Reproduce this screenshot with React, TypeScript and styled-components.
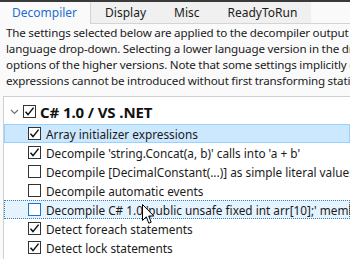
import React from "react";
import styled, { createGlobalStyle, css } from "styled-components";

const Global = createGlobalStyle`
  html, body { margin: 0; padding: 0; background: #fafafa; overflow: hidden; }
  body { font-family: "Noto Sans", "Segoe UI", sans-serif; font-size: 11.8px; color: #1b1b1b; }
`;

const Window = styled.div`
  position: relative;
  width: 350px;
  height: 259px;
  overflow: hidden;
  background: #fafafa;
  display: flex;
  flex-direction: column;
`;

const TopBar = styled.div`
  height: 2px;
  background: #3a3a3a;
  flex: none;
`;

const TabStrip = styled.div`
  display: flex;
  height: 21px;
  border-bottom: 1px solid #d4d4d4;
  flex: none;
  font-size: 12px;
`;

const Tab = styled.div<{ $active?: boolean; $first?: boolean }>`
  display: flex;
  align-items: center;
  padding: 0 14px 0 ${(p) => (p.$first ? "12px" : "14px")};
  background: #f0f0f0;
  color: #1b1b1b;
  line-height: 1;
  ${(p) =>
    p.$active &&
    css`
      background: #fafafa;
      color: #1a6fd1;
      border-right: 1px solid #d4d4d4;
      margin-bottom: -1px;
      padding-right: 13px;
    `}
`;

const Content = styled.div`
  display: flex;
  flex-direction: column;
  padding: 1px 0 0 6px;
  flex: 1;
  min-height: 0;
`;

const Line = styled.div`
  height: 16px;
  line-height: 16px;
  white-space: nowrap;
  overflow: hidden;
  font-size: 11.6px;
  letter-spacing: -0.13px;
  word-spacing: -0.3px;
`;

const Tree = styled.div`
  margin: 7px 0 0 -3px;
  background: #ffffff;
  border-top: 1px solid #cfcfcf;
  border-left: 1px solid #cfcfcf;
  padding-top: 2px;
  flex: 1;
`;

const HeaderRow = styled.div`
  display: flex;
  align-items: center;
  height: 25px;
  padding-left: 6px;
`;

const Chevron = styled.svg`
  width: 9px;
  height: 6px;
  margin-right: 4px;
  flex: none;
`;

const Box = styled.span<{ $hover?: boolean }>`
  width: 11px;
  height: 11px;
  border: 1px solid ${(p) => (p.$hover ? "#1a73d9" : "#333333")};
  background: #ffffff;
  display: inline-flex;
  align-items: center;
  justify-content: center;
  flex: none;
`;

const HeaderText = styled.span`
  font-weight: 700;
  font-size: 15px;
  margin-left: 4px;
  white-space: nowrap;
  color: #111;
  letter-spacing: -0.1px;
`;

const Row = styled.div<{ $selected?: boolean; $focused?: boolean }>`
  display: flex;
  align-items: center;
  height: 19px;
  box-sizing: border-box;
  padding-left: 23px;
  border: 1px solid transparent;
  white-space: nowrap;
  ${(p) =>
    p.$selected &&
    css`
      background: #cce8ff;
      border-color: #99d1ff;
    `}
  ${(p) =>
    p.$focused &&
    css`
      background: #e5f3ff;
      border: 1px dotted #3c7fb1;
    `}
`;

const RowText = styled.span`
  margin-left: 5px;
  white-space: nowrap;
`;

const Cursor = styled.svg`
  position: absolute;
  left: 142px;
  top: 204px;
  width: 13px;
  height: 21px;
`;

const Check = () => (
  <svg width="11" height="11" viewBox="0 0 11 11">
    <path d="M1.5 5.8 L4 8.6 L9.6 1.6" fill="none" stroke="#111" strokeWidth="1.5" />
  </svg>
);

const CheckBox = ({ checked, hover }: { checked?: boolean; hover?: boolean }) => (
  <Box $hover={hover}>{checked ? <Check /> : null}</Box>
);

const items: { text: string; checked: boolean; selected?: boolean; focused?: boolean }[] = [
  { text: "Array initializer expressions", checked: true, selected: true },
  { text: "Decompile 'string.Concat(a, b)' calls into 'a + b'", checked: true },
  { text: "Decompile [DecimalConstant(...)] as simple literal values", checked: false },
  { text: "Decompile automatic events", checked: false },
  { text: "Decompile C# 1.0 'public unsafe fixed int arr[10];' members", checked: false, focused: true },
  { text: "Detect foreach statements", checked: true },
  { text: "Detect lock statements", checked: true },
];

export default function App() {
  return (
    <Window>
      <Global />
      <TopBar />
      <TabStrip>
        <Tab $active $first>Decompiler</Tab>
        <Tab>Display</Tab>
        <Tab>Misc</Tab>
        <Tab>ReadyToRun</Tab>
      </TabStrip>
      <Content>
        <Line>The settings selected below are applied to the decompiler output in combination with the selection in the</Line>
        <Line>language drop-down. Selecting a lower language version in the drop-down will deactivate all selected</Line>
        <Line>options of the higher versions. Note that some settings implicitly depend on each other, e.g.: LINQ</Line>
        <Line>expressions cannot be introduced without first transforming static calls to extension method calls.</Line>
        <Tree>
          <HeaderRow>
            <Chevron viewBox="0 0 9 6">
              <path d="M1 1 L4.5 4.5 L8 1" fill="none" stroke="#707070" strokeWidth="1.2" />
            </Chevron>
            <CheckBox checked />
            <HeaderText>C# 1.0 / VS .NET</HeaderText>
          </HeaderRow>
          {items.map((it) => (
            <Row key={it.text} $selected={it.selected} $focused={it.focused}>
              <CheckBox checked={it.checked} hover={it.focused} />
              <RowText>{it.text}</RowText>
            </Row>
          ))}
        </Tree>
      </Content>
      <Cursor viewBox="0 0 13 21">
        <path
          d="M0.5 0.5 L0.5 16.5 L4.3 12.8 L6.8 19.2 L9.2 18.2 L6.7 12 L11.8 12 Z"
          fill="#ffffff"
          stroke="#000000"
          strokeWidth="1"
          strokeLinejoin="round"
        />
      </Cursor>
    </Window>
  );
}
